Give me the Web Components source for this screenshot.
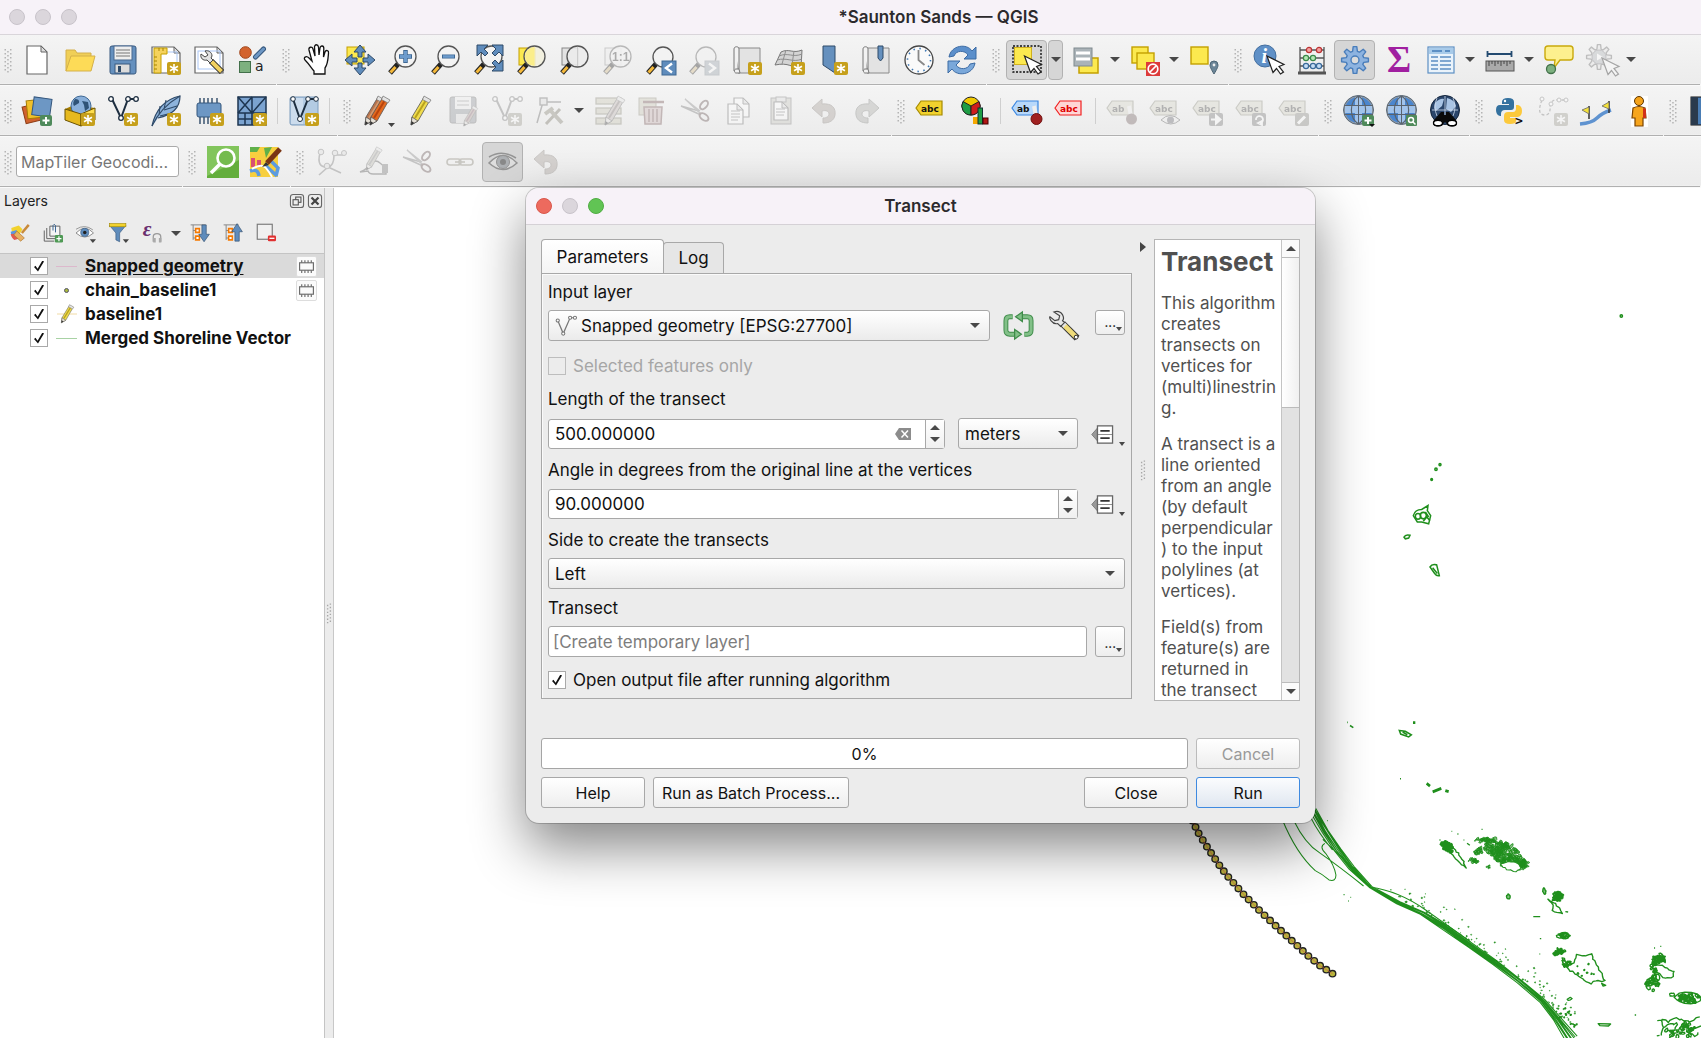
<!DOCTYPE html>
<html lang="en">
<head>
<meta charset="utf-8">
<title>*Saunton Sands — QGIS</title>
<style>
html,body{margin:0;height:100%}
body{font:16px/20px Inter,"Liberation Sans",sans-serif;color:#1a1a1a;background:#ececec;overflow:hidden}
</style>
</head>
<body>
<app-window>
  <title-bar slot="title" heading="*Saunton Sands — QGIS"></title-bar>
  <tool-strip slot="bars">
    <tool-group tools="new open save newlayout layoutmgr style"></tool-group>
    <tool-group tools="hand pan zoomin zoomout zoomfull zoomsel zoomlayer zoomnative! zoomlast zoomnext! newmap new3d newbookmark bookmarks clock refresh"></tool-group>
    <tool-group tools="select*> selform> deselect> selloc"></tool-group>
    <tool-group tools="info abacus gear* sigma table> ruler> bubble action!>"></tool-group>
  </tool-strip>
  <tool-strip slot="bars">
    <tool-group tools="datasrc geopackage shp feather chip mesh | virtual |"></tool-group>
    <tool-group tools="pencils pencil saveedit! addline! vertex!> modify! delete! cut! copy! paste! undo! redo!"></tool-group>
    <tool-group tools="label diagram | pinned redlabel | lpin! leye! lmove! lrot! ledit!"></tool-group>
    <tool-group tools="globeadd globefind globebino"></tool-group>
    <tool-group tools="python digit! flags person"></tool-group>
    <tool-group tools="book"></tool-group>
  </tool-strip>
  <tool-strip slot="bars">
    <tool-group search="MapTiler Geocodi..."></tool-group>
    <tool-group tools="greenfind mapedit"></tool-group>
    <tool-group tools="trace! handdraw! cut! link! eye!* undo!"></tool-group>
  </tool-strip>
  <layers-panel slot="side">
    <layer-row selected symbol="pink" name="Snapped geometry" memory></layer-row>
    <layer-row symbol="dot" name="chain_baseline1" memory></layer-row>
    <layer-row symbol="pen" name="baseline1"></layer-row>
    <layer-row symbol="green" name="Merged Shoreline Vector"></layer-row>
  </layers-panel>
  <map-canvas slot="map"></map-canvas>
  <tool-dialog slot="dialog" heading="Transect">
    <transect-form slot="form"></transect-form>
    <help-pane slot="help">
      <h1>Transect</h1>
      <p>This algorithm<br>creates<br>transects on<br>vertices for<br>(multi)linestrin<br>g.</p>
      <p>A transect is a<br>line oriented<br>from an angle<br>(by default<br>perpendicular<br>) to the input<br>polylines (at<br>vertices).</p>
      <p>Field(s) from<br>feature(s) are<br>returned in<br>the transect</p>
    </help-pane>
  </tool-dialog>
</app-window>
<script>
/* ---------- icon artwork, each on a 32 x 32 grid ---------- */
const badge = (fill = '#c6a01c') => `<rect x="17" y="18" width="14" height="13" rx="2" fill="${fill}"/><path d="M24 20v9M20 22.2l8 4.6M28 22.2l-8 4.6" stroke="#fff" stroke-width="1.6"/>`;
const plusBadge = `<rect x="19" y="20" width="12" height="11" rx="2" fill="#4f8a5b"/><path d="M25 22v7M21.500 25.500h7" stroke="#fff" stroke-width="2"/>`;
const mag = (inner = '', fill = '#f3f3f3') => `<path d="M3 29L11 20" stroke="#222" stroke-width="5"/><path d="M3.500 28.500L8.500 23" stroke="#f5b93a" stroke-width="3"/><circle cx="18.500" cy="12.500" r="10.500" fill="${fill}" fill-opacity=".85" stroke="#555" stroke-width="1.3"/>${inner}`;
const magS = (inner) => `<path d="M3 29L11 20" stroke="#222" stroke-width="5"/><path d="M3.500 28.500L8.500 23" stroke="#f5b93a" stroke-width="3"/><circle cx="18" cy="13" r="10" fill="#f3f3f3" stroke="#555" stroke-width="1.3"/>${inner}`;
const cursor = (x, y) => `<path transform="translate(${x} ${y})" d="M0 0L17 8.500L12 10.500L16.500 16L13.500 18L9.500 12.500L6 16.500z" fill="#fff" stroke="#222" stroke-width="1.2"/>`;
const vnodes = (s = '#1d2e40') => `<path d="M5 4l9 19L21 4h9" fill="none" stroke="${s}" stroke-width="2"/><g fill="#fff" stroke="${s}" stroke-width="1.3"><circle cx="4" cy="4" r="2.3"/><circle cx="14" cy="23" r="2.300"/><circle cx="21" cy="4" r="2.300"/><circle cx="29" cy="4" r="2.300"/></g>`;
const pencil = (x, body, side) => `<g transform="translate(${x} 0)"><path d="M4 30L5 22L17 2L23 5L11 26z" fill="${body}" stroke="#555" stroke-width=".8"/><path d="M8 23L20 3.500" stroke="${side}" stroke-width="2"/><path d="M4 30L5 22L11 26z" fill="#e6e0d6" stroke="#555" stroke-width=".8"/><path d="M4 30l.5-4 2.800 2z" fill="#333"/><path d="M15.500 4.500L17 1l7 4-2 3z" fill="#e4e4e4" stroke="#777" stroke-width=".7"/></g>`;
const tag = (t, fill, stroke, ink, x = 3) => `<path d="M${x} 13l5-7h21v14H${x + 5}z" fill="${fill}" stroke="${stroke}" stroke-width="1.2"/><text x="${x + 5}" y="16.500" font-family="DejaVu Sans" font-weight="700" font-size="9" fill="${ink}">${t}</text>`;
const globe = (fill = '#4a86cf') => `<ellipse cx="15.500" cy="15" rx="15" ry="14.500" fill="#8f9aa6" stroke="#5a6876"/><ellipse cx="15.500" cy="15" rx="13.500" ry="13" fill="${fill}"/><path d="M12 2h7v26h-7zM2 11h27v7H2z" fill="#cfe4fa" opacity=".65"/><path d="M1 10.500h29M1 19.500h29M15.500 1v28" stroke="#59636e"/><path d="M15.500 1C6 7 6 23 15.500 29M15.500 1C25 7 25 23 15.500 29" fill="none" stroke="#59636e" stroke-width="1.2"/>`;
const scissors = `<g fill="none"><path d="M2 11l20 9M2 11l18 5" stroke="#777" stroke-width="1.400"/><path d="M6 4l16 15M6 4l15 12" stroke="#888" stroke-width="1.400"/><ellipse cx="25" cy="10" rx="5" ry="3" transform="rotate(-50 25 10)" stroke="#7a4a4a" stroke-width="2"/><ellipse cx="25" cy="22" rx="5" ry="3" transform="rotate(35 25 22)" stroke="#7a4a4a" stroke-width="2"/></g>`;
const undo = `<path d="M4 13L14 4v5c10-1 14 4 13 11c-1 6-6 8-12 8v-5c4 0 6-2 6-4c0-3-3-4-7-3v6z" fill="#b09a8a" stroke="#8d7c70"/>`;
const gearPath = (fill, stroke, cx = 16, cy = 16, r = 10) => { let d = ''; for (let i = 0; i < 8; i++) { const a = i * Math.PI / 4; const p = (rr, o) => `${(cx + rr * Math.cos(a + o)).toFixed(1)} ${(cy + rr * Math.sin(a + o)).toFixed(1)}`; d += `${i ? 'L' : 'M'}${p(r - 1, -.27)}L${p(r + 3.500, -.13)}L${p(r + 3.500, .13)}L${p(r - 1, .27)}`; } return `<path d="${d}z" fill="${fill}" stroke="${stroke}" stroke-width="1.4" stroke-linejoin="round"/>`; };
const arrow4 = (d, f) => [0, 90, 180, 270].map(a => `<path transform="rotate(${a} 16 16)" d="${d}" fill="${f}" stroke="#2f4a68" stroke-width="1"/>`).join('');
const doc = (x, y, w, h, extra = '') => `<path d="M${x} ${y}h${w - 6}l6 6v${h - 6}h-${w}z" fill="#fff" stroke="#666" stroke-width="1.2"/><path d="M${x + w - 6} ${y}v6h6z" fill="#ddd" stroke="#666"/>${extra}`;
const wrench = `<path d="M18 17L29 28" stroke="#222" stroke-width="6"/><path d="M18.500 17.500L28.500 27.500" stroke="#f0d060" stroke-width="4"/><path d="M12 7c3-1 7 1 7 5l-1 2 2 2-3 3-3-3c-4 1-7-2-6-6l4 3 3-2z" fill="#e2e2e2" stroke="#444" stroke-width="1"/>`;
const I = {
  new: doc(6, 2, 20, 28),
  open: `<path d="M2 27V6h9l2 3h14v5" fill="#f0cf57" stroke="#d4b04a"/><path d="M2 27L7 12h24l-4 15z" fill="#fddb57" stroke="#d4b04a"/>`,
  save: `<rect x="3" y="2" width="26" height="28" rx="2" fill="#6590be" stroke="#38597f"/><rect x="7" y="2" width="18" height="14" fill="#eee" stroke="#48698f"/><path d="M9 6h14M9 9h14M9 12h14" stroke="#777" stroke-width="1.2"/><rect x="8" y="20" width="15" height="9" fill="#dcdcdc" stroke="#38597f"/><rect x="11" y="22" width="3" height="6" fill="#2f4a68"/>`,
  newlayout: doc(2, 3, 28, 26, '<path d="M7 8h20v18" fill="none" stroke="#a9c6f5"/>') + `<path d="M4 4h13v6h-6v19H4z" fill="#f5d25c" stroke="#c4a000"/><path d="M4 13h3M4 17h3M4 21h3M4 25h3M9 4v3M13 4v3" stroke="#a88400"/>` + badge(),
  layoutmgr: doc(2, 3, 28, 26, '<rect x="5" y="7" width="22" height="18" fill="none" stroke="#a9c6f5"/>') + wrench,
  style: `<circle cx="9.500" cy="8.500" r="5.800" fill="#d3642f" stroke="#a04418"/><path d="M19.500 13L27.500 5" stroke="#35577d" stroke-width="5" stroke-linecap="round"/><path d="M19.500 13L27.500 5" stroke="#6d97c4" stroke-width="3" stroke-linecap="round"/><rect x="3.500" y="17.500" width="11" height="11" fill="#7db07f" stroke="#42704a"/><text x="19" y="27" font-family="DejaVu Sans" font-size="14" fill="#222">a</text>`,
  hand: `<path d="M13 30v-3C10 24 9 21 4 16c-2-2 1-5 4-2l3 3L8 6c-.6-3 3-4 4-1l2 7-.5-9c0-3 3.500-3 4 0l.5 8 1-7c.4-3 4-2.500 3.800.5L22.500 13l1.500-5c1-2.500 4-1.500 3.500 1C27 15 27 20 24 24v6z" fill="#fff" stroke="#111" stroke-width="1.3"/>`,
  pan: `<rect x="3" y="3" width="17" height="17" fill="#fce94f" stroke="#c4a000"/>` + arrow4('M16 1l6 7h-4v5h-4v-5h-4z', '#5f8cbc'),
  zoomin: mag('<path d="M18.500 6v13M12 12.500h13" stroke="#3e6894" stroke-width="4.500"/><path d="M18.500 7v11M13 12.500h11" stroke="#6d9bcc" stroke-width="3"/>'),
  zoomout: mag('<path d="M12 12.500h13" stroke="#3e6894" stroke-width="4"/><path d="M13 12.500h11" stroke="#6d9bcc" stroke-width="2.500"/>'),
  zoomfull: mag('') + ['', 'rotate(90 17 14)', 'rotate(180 17 14)'].map(t => `<path transform="${t}" d="M4 1h11l-4 4 4 4-3 3-4-4-4 4z" fill="#5f8cbc" stroke="#2f4a68"/>`).join(''),
  zoomsel: `<rect x="3" y="4" width="16" height="17" fill="#fce94f" stroke="#c4a000"/>` + mag('<path d="M18.500 3v19a9.500 9.500 0 0 1 0-19" fill="#fbee8a"/>', '#f2f0dc'),
  zoomlayer: `<rect x="3" y="4" width="16" height="17" fill="#e2e2e2" stroke="#888"/>` + mag('<path d="M18.500 3v19" stroke="#ccc"/>', '#ececec'),
  zoomnative: `<rect x="3" y="4" width="16" height="17" fill="#eee" stroke="#888"/>` + mag('<text x="10" y="17" font-family="Liberation Sans" font-weight="700" font-size="12" fill="#333">1:1</text>'),
  zoomlast: magS('<rect x="17" y="17" width="14" height="14" fill="#5f8cbc" stroke="#3e6894"/><path d="M27 19.500L21 24l6 4.500" fill="none" stroke="#fff" stroke-width="2.4"/>'),
  zoomnext: magS('<rect x="17" y="17" width="14" height="14" fill="#8fa6bd" stroke="#7a8fa3"/><path d="M21 19.500l6 4.500-6 4.500" fill="none" stroke="#fff" stroke-width="2.400"/>'),
  newmap: `<path d="M7 4h22v25H7z" fill="#e3e3e3" stroke="#8a8a8a"/><path d="M3 5c0-3 5-3 5 0v20H5c-2 0-2 4 0 4h4l-1-4M3 5v22" fill="#f3f3f3" stroke="#777"/>` + badge(),
  new3d: `<path d="M1 21L7 8c8-4 12 2 21-2l-1 18c-9 0-12-6-26-3z" fill="#d4d4d4" stroke="#777"/><path d="M3 16c10-3 16 3 25-1M5 12c9-4 14 2 23-2M12 6l-4 14M20 7l-2 14" fill="none" stroke="#8f8f8f"/>` + badge(),
  newbookmark: `<path d="M6 2h12v27l-6-4-6-4z" fill="#6590be" stroke="#2f4a68"/>` + badge(),
  bookmarks: `<path d="M7 4h22v25H7z" fill="#e3e3e3" stroke="#8a8a8a"/><path d="M3 5c0-3 5-3 5 0v20H5c-2 0-2 4 0 4h4l-1-4M3 5v22" fill="#f3f3f3" stroke="#777"/><path d="M18 2h5v12l-2.500 3L18 14z" fill="#6590be" stroke="#2f4a68"/>`,
  clock: `<circle cx="16" cy="16" r="14" fill="#fafafa" stroke="#444" stroke-width="1.300"/><circle cx="16" cy="16" r="11.500" fill="none" stroke="#3e78b4" stroke-width="1.600" stroke-dasharray="1.500 4.520"/><path d="M15.500 6v10l6 5" fill="none" stroke="#888" stroke-width="1.800"/>`,
  refresh: `<path d="M3 13C5 1 21-1 26 7l4-4v12H18l4-4c-3-5-12-5-14 1z" fill="#5b8fcb" stroke="#3b6aa3"/><path d="M29 19C27 31 11 33 6 25l-4 4V17h12l-4 4c3 5 12 5 14-1z" fill="#7aa8da" stroke="#3b6aa3"/>`,
  select: `<rect x="2" y="2" width="28" height="26" fill="none" stroke="#111" stroke-width="1.400" stroke-dasharray="2 1.500"/><rect x="3.500" y="3.500" width="17" height="17" fill="#fce94f" stroke="#d0b020"/>` + cursor(13.500, 12),
  selform: `<rect x="9" y="14" width="19" height="15" fill="#fce94f" stroke="#c4a000" stroke-width="1.500"/><rect x="4" y="4" width="18" height="18" fill="#aab3b8" stroke="#7f898e"/><path d="M6 9h14M6 15h14" stroke="#fff" stroke-width="3"/>`,
  deselect: `<rect x="3" y="3" width="16" height="16" fill="#fce94f" stroke="#c4a000" stroke-width="1.400"/><rect x="8" y="9" width="17" height="16" fill="#fce94f" stroke="#c4a000" stroke-width="1.400"/><rect x="17" y="18" width="14" height="14" fill="#dd3a3a"/><circle cx="24" cy="25" r="4.800" fill="none" stroke="#fff" stroke-width="1.700"/><path d="M20.500 28.500l7-7" stroke="#fff" stroke-width="1.700"/>`,
  selloc: `<rect x="3" y="3" width="17" height="17" fill="#fce94f" stroke="#c4a000" stroke-width="1.400"/><path d="M26 30c-3-5-4-7-4-9a4 4 0 0 1 8 0c0 2-1 4-4 9z" fill="#6b8597" stroke="#4c6474"/><circle cx="26" cy="21" r="1.400" fill="#eee"/>`,
  info: `<circle cx="12" cy="12" r="11" fill="#5f90c7" stroke="#446f9f"/><text x="8.500" y="19" font-family="Liberation Serif" font-style="italic" font-weight="700" font-size="20" fill="#fff">i</text>` + cursor(14, 12),
  abacus: `<path d="M4 3v25M28 3v25M4 6h24M4 14h24M4 22h24" stroke="#555" stroke-width="1.300"/><path d="M2 29h28" stroke="#555" stroke-width="3"/><g stroke-width="1.200"><g fill="#f5a0a0" stroke="#b33"><circle cx="13" cy="6" r="2.600"/><circle cx="23" cy="6" r="2.600"/></g><g fill="#b5e8b5" stroke="#3a8a4a"><circle cx="10" cy="14" r="2.600"/><circle cx="17" cy="14" r="2.600"/></g><g fill="#c5ddf5" stroke="#3a6a9a"><circle cx="10" cy="22" r="2.600"/><circle cx="17" cy="22" r="2.600"/><circle cx="23" cy="22" r="2.600"/></g></g>`,
  gear: gearPath('#8db3e0', '#4a7ebb') + `<circle cx="16" cy="16" r="4" fill="#dcdcdc" stroke="#4a7ebb" stroke-width="1.400"/>`,
  sigma: `<text x="5" y="28" font-family="Liberation Serif" font-weight="700" font-size="37" fill="#a01fa0">Σ</text>`,
  table: `<rect x="3" y="3" width="26" height="26" fill="#eaf3fb" stroke="#5c8fc4" stroke-width="1.200"/><rect x="4" y="4" width="24" height="6" fill="#a8cbea"/><path d="M7 7h10M20 7h5" stroke="#5c8fc4" stroke-width="2"/><path d="M6 13h7M15 13h11M6 17h7M15 17h11M6 21h7M15 21h11M6 25h7M15 25h11" stroke="#5c8fc4" stroke-width="1.300"/>`,
  ruler: `<path d="M3 10h25M3.500 7v6M27.500 7v6" stroke="#234a70" stroke-width="1.800"/><rect x="2" y="17" width="28" height="10" fill="#aaa" stroke="#555"/><path d="M5 17v5M8 17v3M11 17v5M14 17v3M17 17v5M20 17v3M23 17v5M26 17v3" stroke="#444"/>`,
  bubble: `<path d="M12 20l-3 7" stroke="#444"/><path d="M5 2h22q3 0 3 3v8q0 3-3 3H17l-6 8 1-8H5q-3 0-3-3V5q0-3 3-3z" fill="#fdf08e" stroke="#c9a90c" stroke-width="1.400"/><circle cx="8" cy="25" r="4.500" fill="#7db07f" stroke="#42704a" stroke-width="1.300"/>`,
  action: gearPath('#e4e4e4', '#666', 13, 13, 9) + `<circle cx="13" cy="13" r="7" fill="#a8b4be" stroke="#778"/><path d="M11 9.500v7l6-3.500z" fill="#fff"/>` + cursor(16, 14),
  datasrc: `<rect x="3" y="10" width="17" height="17" fill="#d0622f" stroke="#8e3e17" transform="rotate(-14 11 19)"/><rect x="6" y="5" width="17" height="18" fill="#f0c02a" stroke="#a67d00" transform="rotate(-6 14 14)"/><rect x="12" y="3" width="18" height="18" fill="#6d97c4" stroke="#35577d" transform="rotate(8 21 11)"/>` + plusBadge,
  geopackage: `<path d="M1 14l9-4 21 3-14 6z" fill="#a67d00"/><circle cx="17" cy="11" r="10" fill="#8ab0da" stroke="#3e6894"/><path d="M11 4q5 0 4 4l-5 3q-2-3 1-7zM18 6l6 1 1 6-4 3-1-6z" fill="#2f5377"/><path d="M1 14l16 5v12L1 25z" fill="#e6b91e" stroke="#6b5200"/><path d="M31 13l-14 6v12l14-6z" fill="#fddd4d" stroke="#6b5200"/>` + badge(),
  shp: vnodes() + badge(),
  feather: `<path d="M2 31C5 17 12 5 30 1c0 12-8 19-22 22" fill="#8db3dc" stroke="#2f4a68" stroke-width="1.200"/><path d="M2 31C8 18 18 8 30 1M10 21l12-3M14 15l13-4M9 20l1-9M14 14l2-9" fill="none" stroke="#2f4a68" stroke-width="1.100"/>` + badge(),
  chip: `<path d="M7 3v26M11 3v26M15 3v26M19 3v26M24 3v26" stroke="#2f4a68" stroke-width="1.400"/><rect x="4" y="8" width="24" height="14" rx="2" fill="#6d97c4" stroke="#35577d"/>` + badge(),
  mesh: `<rect x="2" y="2" width="28" height="28" fill="#7ba3d0" stroke="#1d3550" stroke-width="1.500"/><path d="M16 2v28M2 18h28M2 2l14 16M16 2L2 18M30 2L16 18M2 24h14M9 18v12" stroke="#1d3550" stroke-width="1.500"/>` + badge(),
  virtual: `<rect x="2" y="2" width="28" height="28" rx="2" fill="#b3cbe3" stroke="#7d9cbd"/><path d="M3 3h12v26H3z" fill="#dce8f4" opacity=".6"/><path d="M5 4l7 20L20 4h8" fill="none" stroke="#1d2e40" stroke-width="2"/><g fill="#fff" stroke="#1d2e40"><circle cx="5" cy="4" r="2.300"/><circle cx="20" cy="4" r="2.300"/><circle cx="28" cy="4" r="2.300"/><circle cx="12" cy="24" r="2.500"/></g>` + badge(),
  pencils: pencil(-1, '#b8734c', '#d39a70') + pencil(4, '#e36a1f', '#b8430e') + `<path d="M26 28h7l-3.500 4z" fill="#444"/>`,
  pencil: pencil(2, '#f0dc4e', '#b8a21c'),
  saveedit: `<rect x="2" y="2" width="26" height="26" rx="2" fill="#8794a3" stroke="#666"/><rect x="7" y="2" width="16" height="12" fill="#eee"/><path d="M9 6h12M9 10h12" stroke="#888"/><rect x="8" y="19" width="14" height="9" fill="#ddd"/><g transform="translate(13 10) scale(.700)">${pencil(0, '#c79a8a', '#a57')}</g>`,
  addline: vnodes('#777') + badge('#a09a80'),
  vertex: `<path d="M3 28L9 7l18 0" fill="none" stroke="#666" stroke-width="1.500"/><rect x="6" y="3" width="7" height="7" fill="#ddd" stroke="#666" stroke-width="1.400"/><path d="M12 29L26 14" stroke="#7a7250" stroke-width="3"/><path d="M16 15l12 13M11 19l8-6" stroke="#8a8260" stroke-width="4"/>`,
  modify: `<g fill="#cfc79a" stroke="#8d875f" stroke-width="1.300"><rect x="3" y="3" width="25" height="6"/><rect x="3" y="13" width="25" height="6"/><rect x="3" y="23" width="25" height="6"/></g>` + pencil(8, '#c9b0a8', '#8a706a'),
  delete: `<rect x="3" y="3" width="17" height="17" fill="#cfc79a" stroke="#8d875f"/><path d="M7 7h21" stroke="#9a4a4a" stroke-width="2.500"/><path d="M8 12h18l-1 17H9z" fill="#e0a8a8" stroke="#9a4a4a" stroke-width="1.500"/><path d="M13 14v13M17 14v13M21 14v13" stroke="#9a4a4a" stroke-width="1.500"/>`,
  cut: scissors,
  copy: doc(12, 3, 15, 19) + doc(6, 9, 15, 20, '<path d="M9 16h9M9 19h9M9 22h9M9 25h7" stroke="#777"/>'),
  paste: `<rect x="6" y="3" width="20" height="26" fill="#c9c6b5" stroke="#777"/><rect x="11" y="2" width="10" height="5" fill="#ddd" stroke="#777"/>` + doc(9, 7, 14, 18, '<path d="M11 14h9M11 17h9M11 20h8" stroke="#777"/>'),
  undo, redo: `<g transform="matrix(-1 0 0 1 32 0)">${undo.replace('#b09a8a', '#a9aaa0').replace('#8d7c70', '#7c8076')}</g>`,
  label: tag('abc', '#f2d22e', '#a68b00', '#111', 0),
  diagram: `<circle cx="12" cy="11" r="9" fill="#f0c800" stroke="#222"/><path d="M12 11L4 6.500a9 9 0 0 0 8 13.500z" fill="#1f9d45" stroke="#222"/><path d="M12 11l8-4.500a9 9 0 0 1-8 13.500z" fill="#cf1d1d" stroke="#222"/><rect x="14" y="22" width="5" height="7" fill="#f5a800"/><rect x="19" y="13" width="4.500" height="16" fill="#1f9d45" stroke="#133"/><rect x="24" y="23" width="5" height="6" fill="#b01515" stroke="#400"/>`,
  pinned: tag('ab', '#b8d8fa', '#3a86e0', '#111', 1) + `<path d="M23 11l2 10" stroke="#eee" stroke-width="4"/><circle cx="25.500" cy="24" r="5.500" fill="#a02020" stroke="#701010"/>`,
  redlabel: tag('abc', '#ffd6d6', '#f02020', '#e00000', 1),
  lpin: tag('ab', '#d8d5b0', '#8b8b6a', '#444', 1) + `<path d="M23 11l2 10" stroke="#eee" stroke-width="4"/><circle cx="25.500" cy="24" r="5.500" fill="#8a5a5a"/>`,
  leye: tag('abc', '#d8d5b0', '#8b8b6a', '#444', 1) + `<path d="M12 25q9-9 19 0q-9 8-19 0z" fill="#eee" stroke="#555"/><circle cx="21.500" cy="25" r="3.500" fill="#667"/>`,
  lmove: tag('abc', '#d8d5b0', '#8b8b6a', '#444', 1) + `<rect x="17" y="18" width="14" height="13" rx="2" fill="#777"/><path d="M19 24.500h6M24 20.500l4.500 4-4.500 4z" stroke="#fff" stroke-width="2" fill="#fff"/>`,
  lrot: tag('abc', '#d8d5b0', '#8b8b6a', '#444', 1) + `<rect x="17" y="18" width="14" height="13" rx="2" fill="#777"/><path d="M21 25a3.500 3.500 0 1 1 4 3M23 28l4-2v4z" stroke="#fff" stroke-width="1.800" fill="none"/>`,
  ledit: tag('abc', '#d8d5b0', '#8b8b6a', '#444', 1) + `<rect x="17" y="18" width="14" height="13" rx="2" fill="#8a8778"/><path d="M20 28.500l7-7" stroke="#fff" stroke-width="3"/>`,
  globeadd: globe() + plusBadge + `<path d="M26 29h6l-3 3z" fill="#111"/>`,
  globefind: globe() + `<rect x="20" y="20" width="11" height="11" rx="1" fill="#4f8a5b"/><circle cx="25" cy="25" r="2.500" fill="none" stroke="#fff" stroke-width="1.500"/><path d="M27 27l2.500 2.500" stroke="#fff" stroke-width="1.500"/>`,
  globebino: `<circle cx="16" cy="15" r="14.500" fill="#2b466b" stroke="#14253c"/><path d="M6 8q5-5 9-4l-2 7-6 5q-3-3-1-8zM18 3q8 2 9 8l-5 6-5-3z" fill="#a9c4e4"/><path d="M3 15h26M16 1v20M8 3q-4 9 0 18M24 3q4 9 0 18" fill="none" stroke="#cfdcec" stroke-width=".8"/><path d="M12 17h3v3h2v-3h3l7 8q3 6-3 6.500-6 .500-7-4h-2q-1 4.500-7 4-6-.500-3-6.500z" fill="#0a0a0a"/><ellipse cx="9" cy="28" rx="4.500" ry="2.800" fill="#fff" stroke="#000" stroke-width="1.400"/><ellipse cx="23" cy="28" rx="4.500" ry="2.800" fill="#fff" stroke="#000" stroke-width="1.400"/>`,
  python: `<path d="M8 9V7q0-4 6-4t6 4v5q0 3-3 3h-6q-4 0-4 4v2H6q-4-1-4-6t4-5h9V9z" fill="#34719f"/><circle cx="11" cy="6" r="1.200" fill="#fff"/><path d="M22 10h2q4 1 4 6t-4 6h-8v1h6v3q0 3-6 3t-6-4v-4q0-4 4-4h5q3 0 3-4z" fill="#fcc93c"/><text x="21" y="30" font-family="DejaVu Sans Mono" font-size="13" font-weight="700" fill="#111">&gt;</text>`,
  digit: `<path d="M5 5q-6 15 3 15 6 0 5-10 2-6 8-5h8" fill="none" stroke="#777" stroke-width="1.300" stroke-dasharray="3 2"/><g fill="#fff" stroke="#777"><circle cx="5" cy="4" r="2"/><circle cx="14" cy="9" r="2"/><circle cx="22" cy="5" r="2"/><circle cx="29" cy="5" r="2"/></g>` + badge('#a09a80'),
  flags: `<path d="M0 29q12-1 17-6t14-8" fill="none" stroke="#5f93d0" stroke-width="3.500"/><path d="M9 11v13M29 6v12" stroke="#333" stroke-width="1.500"/><path d="M9 12L2 15l7 4zM29 7l-7 4 7 3z" fill="#f5e23a" stroke="#666" stroke-width=".8"/>`,
  person: `<rect x="8" y="1" width="17" height="31" fill="#fff"/><circle cx="16" cy="6" r="4.500" fill="#f5a31a" stroke="#5a3300"/><path d="M10 13q6-3 12 0l1 10h-3v8h-8v-8H9z" fill="#f7a51c" stroke="#7a4300" stroke-width="1.200"/><path d="M20 13l3 1v9h-3z" fill="#d0311a"/>`,
  book: `<rect x="3" y="2" width="28" height="28" fill="#4a7db5" stroke="#111"/><rect x="3" y="2" width="7" height="28" fill="#2a3a4d"/>`,
  greenfind: `<rect x="0" y="0" width="32" height="32" fill="#63ae3c"/><path d="M0 0h32v14L0 30z" fill="#82c55c"/><circle cx="19" cy="12" r="8.500" fill="#74bb4e" stroke="#fff" stroke-width="2.600"/><path d="M13 18L4 27" stroke="#fff" stroke-width="3.500"/>`,
  mapedit: `<rect x="0" y="1" width="28" height="30" fill="#f7cf3f"/><path d="M0 1h10l-3 5H0zM14 2l8-1-6 11z" fill="#5fb04a"/><path d="M1 12h4v9H1zM7 14h4v7H7z" fill="#d94f73"/><path d="M0 25q8-3 9 5M16 20l11 10M20 14l8 8-2 8" fill="none" stroke="#5c9be0" stroke-width="3.500"/><path d="M2 23q10-6 14-1t6 9" fill="none" stroke="#fff" stroke-width="2"/><path d="M12 21l4-5 3 3z" fill="#333"/><path d="M17 17L30 3" stroke="#7a3514" stroke-width="5"/>`,
  trace: `<path d="M5 7q-4 15 8 14 6-1 6-12h9M13 21l-9 8M13 21l13 6" fill="none" stroke="#777" stroke-width="1.600"/><g fill="#ddd" stroke="#777"><circle cx="6" cy="6" r="2.800"/><circle cx="12" cy="20" r="2.800"/><circle cx="20" cy="7" r="2.800"/><circle cx="29" cy="7" r="2.500"/></g>`,
  handdraw: `<path d="M2 26q8-3 10-9 6-4 10 0l6 5v6H15q-4 0-5-3z" fill="#eee" stroke="#555" stroke-width="1.400"/><path d="M24 18h6v9h-6z" fill="#777"/><g transform="translate(5 0) scale(.800)">${pencil(0, '#bdb9a2', '#888')}</g>`,
  link: `<g fill="none" stroke="#8a8060" stroke-width="1.600"><rect x="3" y="13" width="14" height="6" rx="3"/><rect x="15" y="13" width="14" height="6" rx="3"/><path d="M11 16h10"/></g>`,
  eye: `<path d="M2 17q14-15 28 0q-14 13-28 0z" fill="#eee" stroke="#222" stroke-width="1.500"/><path d="M2 11q13-8 27 1" fill="none" stroke="#222" stroke-width="1.500"/><circle cx="16" cy="16" r="6.500" fill="#5d7086" stroke="#222"/><circle cx="16" cy="16" r="3" fill="#000"/>`,
  /* smaller artwork of the layer panel and the form, also on the 32 grid */
  brush: `<path d="M2 8l12-4 6 6-6 10H4z" fill="#f2d22e"/><path d="M1 14l10-3-2 9-7-1z" fill="#5a96e0"/><path d="M1 18q7-2 9 2l4 5-7 2q-4-2-6-9z" fill="#e05a50"/><path d="M11 13l12 11-6 5L6 19z" fill="#e8b062" stroke="#a8702a"/><path d="M19 16L30 3" stroke="#c98a3a" stroke-width="4"/>`,
  addgroup: `<path d="M2 12v17h16M6 8v17h14" fill="none" stroke="#666" stroke-width="1.600"/><path d="M11 5h16v16H11z" fill="#f4f4f4" stroke="#666" stroke-width="1.600"/><path d="M16 12V4q2-4 4 0v11" fill="none" stroke="#3e6894" stroke-width="1.600"/><rect x="19" y="19" width="13" height="12" rx="2" fill="#4f9a55"/><path d="M25.500 21v8M21.500 25h8" stroke="#fff" stroke-width="2"/>`,
  eyes: `<path d="M0 16q14-15 28 0q-14 13-28 0z" fill="#fff" stroke="#888" stroke-width="1.500"/><path d="M0 10q14-9 27 1" fill="none" stroke="#888" stroke-width="1.300"/><circle cx="14" cy="15" r="6.500" fill="#5f8cbc" stroke="#35577d"/><circle cx="14" cy="15" r="2.800" fill="#222"/><path d="M22 26h10l-5 6z" fill="#444"/>`,
  filter: `<path d="M1 4h26L17 16v14l-6-3V16z" fill="#5f8cbc" stroke="#35577d"/><rect x="1" y="1" width="26" height="5" fill="#f2d22e" stroke="#a68b00"/><path d="M22 26h10l-5 6z" fill="#444"/>`,
  epsilon: `<text x="1" y="20" font-family="Liberation Serif" font-weight="700" font-style="italic" font-size="34" fill="#6a3070">ε</text><path d="M18 30v-8q0-5 6-5t6 5v8" fill="none" stroke="#999" stroke-width="2"/><path d="M18 24h4v7h-4zM27 24h4v7h-4z" fill="#aaa"/>`,
  expand: `<path d="M1 3h24M5 3v24M5 12h6M5 24h6" stroke="#888" stroke-width="1.600"/><path d="M9 9h6v6H9zM9 21h6v6H9z" fill="#fff" stroke="#f57900" stroke-width="2.500"/><path d="M19 3h7v15h5L22.500 30 14 18h5z" fill="#5f8cbc" stroke="#2f4a68"/>`,
  collapse: `<path d="M1 3h24M5 3v24M5 12h6M5 24h6" stroke="#888" stroke-width="1.600"/><path d="M9 9h6v6H9zM9 21h6v6H9z" fill="#fff" stroke="#f57900" stroke-width="2.500"/><path d="M19 29h7V14h5L22.500 1 14 14h5z" fill="#5f8cbc" stroke="#2f4a68"/>`,
  remove: `<rect x="2" y="2" width="24" height="24" fill="#f0f0f0" stroke="#777" stroke-width="1.800"/><rect x="19" y="20" width="13" height="9" rx="2" fill="#e03030"/><path d="M21.500 24.500h8" stroke="#fff" stroke-width="2"/>`,
  float: `<rect x="1" y="1" width="30" height="30" rx="6" fill="none" stroke="#666" stroke-width="2.500"/><rect x="13" y="7" width="12" height="12" fill="none" stroke="#555" stroke-width="2.500"/><rect x="7" y="13" width="12" height="12" fill="#ececec" stroke="#555" stroke-width="2.500"/>`,
  close: `<rect x="1" y="1" width="30" height="30" rx="6" fill="none" stroke="#666" stroke-width="2.500"/><path d="M8 8l16 16M24 8L8 24" stroke="#444" stroke-width="5"/>`,
  memory: `<g fill="none" stroke="#6d6d6d" stroke-width="2.200"><rect x="3" y="9" width="26" height="14"/><path d="M7 4v5M13 4v5M19 4v5M25 4v5M7 23v5M13 23v5M19 23v5M25 23v5"/></g>`,
  penline: `<path d="M0 16h32" stroke="#f0d9a0" stroke-width="1.500"/>` + pencil(3, '#f0dc4e', '#b8a21c'),
  vsmall: `<path d="M4 8l8 19L22 4h8" fill="none" stroke="#777" stroke-width="1.800"/><g fill="#fff" stroke="#777" stroke-width="1.500"><circle cx="4" cy="8" r="2.300"/><circle cx="12" cy="27" r="2.300"/><circle cx="22" cy="4" r="2.300"/><circle cx="29" cy="4" r="2.300"/></g>`,
  iterate: `<g fill="none" stroke-linejoin="round"><path d="M10 7H7q-4 0-4 4v10q0 4 4 4h6M22 25h3q4 0 4-4V11q0-4-4-4h-6" stroke="#3f8c4a" stroke-width="5"/><path d="M10 7H7q-4 0-4 4v10q0 4 4 4h6M22 25h3q4 0 4-4V11q0-4-4-4h-6" stroke="#82c088" stroke-width="3"/></g><path d="M20 2v10l-7-5zM12 20v10l7-5z" fill="#82c088" stroke="#3f8c4a" stroke-width="1.300"/>`,
  wrench: `<path d="M14 14L29 29" stroke="#333" stroke-width="7"/><path d="M14 14l3 3" stroke="#e4e4e4" stroke-width="5"/><path d="M16.500 16.500L28 28" stroke="#f0dc7a" stroke-width="5"/><circle cx="28" cy="28" r="2" fill="#fff" stroke="#222"/><path d="M5 2q6-2 9 3 2 4 0 6l2 2-4 4-3-3q-4 1-7-3-2-3-1-4l5 4 4-1 1-4z" fill="#e8e8e8" stroke="#444" stroke-width="1.200"/>`,
  defined: `<path d="M9 7v18L1 16z" fill="#999" stroke="#666"/><rect x="9" y="4" width="21" height="24" fill="#fff" stroke="#666" stroke-width="1.800"/><path d="M13 11h13M13 21h13" stroke="#333" stroke-width="2.500"/><path d="M9 16h21" stroke="#666"/>`,
  erase: `<path d="M0 16L8 4h24v24H8z" fill="#8c8c8c"/><path d="M13 9l13 14M26 9L13 23" stroke="#fff" stroke-width="3"/>`,
  grip: `<g fill="#b4b4b4" transform="translate(2.500 0)">${[5, 9, 13, 17, 21, 25].map(y => `<path d="M10 ${y}h1.500v1.500h-1.500zM15.500 ${y}h1.500v1.500h-1.500zM12.700 ${y + 2}h1.500v1.500h-1.500z"/>`).join('')}</g>`,
  dots: `<g fill="#a8a8a8">${[2, 7, 12, 17, 22, 27].map(y => `<path d="M17 ${y}h2v2h-2zM13 ${y + 2}h2v2h-2z"/>`).join('')}</g>`
};

const def = (name, cls) => customElements.define(name, cls);
class Base extends HTMLElement {
  connectedCallback() {
    if (this.shadowRoot) return;
    this.attachShadow({ mode: 'open' }).innerHTML = `<style>:host,*{box-sizing:border-box}button,input,select{font:inherit;color:inherit;margin:0}${this.css()}</style>${this.html()}`;
  }
  at(n) { return this.getAttribute(n) || ''; }
}

def('art-icon', class extends Base {
  css() { const s = this.at('size') || 32; return `:host{display:block;flex:none;width:${s}px;height:${s}px}svg{display:block;width:100%;height:100%;overflow:visible}`; }
  html() { return `<svg viewBox="0 0 32 32" aria-hidden="true">${I[this.at('name')]}</svg>`; }
});

def('down-arrow', class extends Base {
  css() { return `:host{display:block;flex:none;width:10px;height:5px}:host([small]){width:6px;height:4px}svg{display:block;width:100%;height:100%}:host([up]) svg{transform:rotate(180deg)}`; }
  html() { return `<svg viewBox="0 0 10 6" preserveAspectRatio="none"><path d="M0 0h10L5 6z" fill="#484848"/></svg>`; }
});

def('traffic-lights', class extends Base {
  css() { return `:host{display:flex;gap:10px}i{width:16px;height:16px;border-radius:50%;background:#dbd6dc;border:1px solid #c8c3ca}:host([live]) i:first-of-type{background:#ed6a5e;border-color:#d9574c}:host([live]) i:last-of-type{background:#61c454;border-color:#50ad43}`; }
  html() { return `<i></i><i></i><i></i>`; }
});

def('title-bar', class extends Base {
  css() { return `:host{display:grid;grid-template-columns:176px 1fr;align-items:center;height:35px;flex:none;padding-bottom:1px;background:#f7f2f8;border-bottom:1px solid #d9d5da}traffic-lights{padding-left:9px}b{font-weight:600;font-size:17px;color:#2c2a2d;text-align:center}`; }
  html() { return `<traffic-lights></traffic-lights><b>${this.at('heading')}</b>`; }
});

def('app-window', class extends Base {
  css() { return `:host{display:flex;flex-direction:column;height:100vh;position:relative;overflow:hidden}.main{flex:1;display:flex;min-height:0}.split{width:9px;flex:none;background:#ececec;display:flex;align-items:center;justify-content:center;border-left:1px solid #c4c4c4}::slotted(map-canvas){flex:1;min-width:0}`; }
  html() { return `<slot name="title"></slot><slot name="bars"></slot><div class="main"><slot name="side"></slot><div class="split"><art-icon name="dots" size="22"></art-icon></div><slot name="map"></slot></div><slot name="dialog"></slot>`; }
});

def('tool-strip', class extends Base {
  css() { return `:host{display:flex;height:51px;background:linear-gradient(#f4f4f4,#ececec 48px,#fafafa 50px);flex:none;overflow:hidden}::slotted(tool-group:last-child){flex:1 0 auto}::slotted(tool-group:first-child){--lead:15px}`; }
  html() { return `<slot></slot>`; }
});

def('tool-group', class extends Base {
  css() { return `:host{display:flex;align-items:center;flex:none;padding:0 4px 2px 0;background:linear-gradient(#b0b0b0,#b0b0b0) 0 49px/calc(100% - 1px) 1px no-repeat}
  .lead{width:var(--lead,18px);display:flex;justify-content:center;flex:none}.lead art-icon{margin:0 -8px}
  button{width:41px;height:40px;margin:0 1px;padding:0;border:1px solid transparent;border-radius:4px;background:none;display:grid;place-items:center;flex:none}
  button.on{background:#d6d6d6;border-color:#b2b2b2}
  button:disabled art-icon{opacity:.36;filter:grayscale(.6)}
  button.more{width:15px;margin:0 1px 0 0}
  hr{width:1px;height:26px;margin:0 4px;border:0;background:#cfcfcf;flex:none}
  input{width:163px;height:31px;margin-left:1px;border:1px solid #aaa;border-radius:3px;padding:0 4px;background:#fff;color:#777;font-size:16px}input::placeholder{color:#777;opacity:1}`; }
  html() {
    const s = this.at('search');
    let h = `<div class="lead"><art-icon name="grip"></art-icon></div>`;
    if (s) return h + `<input type="text" aria-label="Geocoder" placeholder="${s}">`;
    for (const t of this.at('tools').split(' ')) {
      if (t === '|') { h += '<hr>'; continue; }
      const n = t.replace(/[!*>]/g, ''), on = t.includes('*') ? ' class="on"' : '';
      h += `<button type="button" aria-label="${n}"${on}${t.includes('!') ? ' disabled' : ''}><art-icon name="${n}"></art-icon></button>`;
      if (t.includes('>')) h += `<button type="button" aria-label="${n} menu" class="more${on ? ' on' : ''}"><down-arrow></down-arrow></button>`;
    }
    return h;
  }
});

def('layers-panel', class extends Base {
  css() { return `:host{display:flex;flex-direction:column;width:324px;flex:none;background:#ececec}
  header{display:flex;align-items:center;gap:4px;height:25px;padding:0 2px 0 4px;font-size:14px;color:#222}header span{flex:1}
  nav{display:flex;align-items:center;height:40px;padding-left:10px;gap:13px}button{border:0;padding:0;background:none;display:block}
  .more{margin:0 -4px}.tree{flex:1;background:#fff;border-top:1px solid #c4c4c4}`; }
  html() {
    const b = (n, s = 20) => `<button type="button" aria-label="${n}"><art-icon name="${n}" size="${s}"></art-icon></button>`;
    return `<header><span>Layers</span>${b('float', 14)}${b('close', 14)}</header><nav>${b('brush')}${b('addgroup')}${b('eyes')}${b('filter')}${b('epsilon')}<button type="button" class="more" aria-label="epsilon menu"><down-arrow></down-arrow></button>${b('expand')}${b('collapse')}${b('remove')}</nav><div class="tree"><slot></slot></div>`;
  }
});

const tick = `input[type=checkbox]{appearance:none;width:18px;height:18px;margin:0;flex:none;border:1px solid #a9a9a9;background:#fff;display:grid;place-items:center}input[type=checkbox]:checked::before{content:"";width:10px;height:11px;background:#111;clip-path:polygon(0 58%,15% 48%,36% 74%,84% 0,100% 8%,40% 100%)}`;

def('layer-row', class extends Base {
  css() { return `:host{display:flex;align-items:center;height:24px;padding:0 7px 0 30px}:host([selected]){background:#dadada}:host([selected]) b{text-decoration:underline;text-underline-offset:2px}
  label{display:flex;align-items:center;flex:1}.sym{width:21px;height:22px;margin:0 8px;display:grid;place-items:center}.sym hr{width:21px;height:1px;border:0;margin:0}
  .dot{width:5px;height:5px;border-radius:50%;background:#a9b83c;border:1px solid #556}b{font-weight:700;font-size:17px;color:#111}
  .mem{width:21px;height:21px;border:1px solid #ddd;border-radius:2px;background:#fbfbfb;display:grid;place-items:center}${tick}`; }
  html() {
    const s = { pink: '<hr style="background:#dcb8cc">', green: '<hr style="background:#a8d2a4">', dot: '<div class="dot"></div>', pen: '<art-icon name="penline" size="20"></art-icon>' }[this.at('symbol')];
    return `<label><input type="checkbox" checked><span class="sym">${s}</span><b>${this.at('name')}</b></label>${this.hasAttribute('memory') ? '<span class="mem"><art-icon name="memory" size="17"></art-icon></span>' : ''}`;
  }
});

/* ---------- map ---------- */
let seed = 7;
const rnd = () => (seed = (seed * 16807) % 2147483647) / 2147483647;
const blob = (cx, cy, rx, ry, rot = 0, j = .35, n = 14) => {
  let d = ''; const c = Math.cos(rot), s = Math.sin(rot);
  for (let i = 0; i < n; i++) { const a = i / n * 6.283, k = 1 - j * rnd(), x = rx * k * Math.cos(a), y = ry * k * Math.sin(a); d += `${i ? 'L' : 'M'}${(cx + x * c - y * s).toFixed(1)} ${(cy + x * s + y * c).toFixed(1)}`; }
  return d + 'z';
};
const mass = (cx, cy, rx, ry, rot, n, r) => { let d = ''; const c = Math.cos(rot), s = Math.sin(rot); for (let i = 0; i < n; i++) { const a = rnd() * 6.283, k = Math.sqrt(rnd()), x = rx * k * Math.cos(a), y = ry * k * Math.sin(a); d += blob(cx + x * c - y * s, cy + x * s + y * c, r * (.5 + rnd()), r * (.4 + rnd() * .6), rnd() * 3, .4, 7); } return d; };
/* adds small irregular steps to a polyline so that it reads as a surveyed outline */
const rough = (pts, j = 3, closed = true) => { let d = ''; const n = pts.length; for (let i = 0; i < n - (closed ? 0 : 1); i++) { const a = pts[i], b = pts[(i + 1) % n], m = Math.max(1, Math.round(Math.hypot(b[0] - a[0], b[1] - a[1]) / 7)); for (let k = 0; k < m; k++) d += `${d ? 'L' : 'M'}${(a[0] + (b[0] - a[0]) * k / m + (rnd() - .5) * j * 2).toFixed(1)} ${(a[1] + (b[1] - a[1]) * k / m + (rnd() - .5) * j * 2).toFixed(1)}`; } return d + (closed ? 'z' : ''); };
const coast = [[444, 30], [480, 95], [515, 150], [555, 203], [610, 262], [690, 308], [760, 340], [830, 385], [900, 437], [970, 488], [1040, 543], [1110, 604], [1150, 655], [1194, 718]];
const strand = (off, w) => { const p = coast.map(([x, y], i) => [x + off * (w[i] ?? 1) + (rnd() - .5) * 3, y - off * .6 * (w[i] ?? 1) + (rnd() - .5) * 3]); return 'M' + p.map(q => q.map(v => v.toFixed(1)).join(' ')).join('L'); };

def('map-canvas', class extends Base {
  css() { return `:host{display:block;background:#fff;border-left:1px solid #c8c8c8;overflow:hidden}svg{display:block;width:100%;height:100%}`; }
  html() {
    const w = [.9, 1, 1, .8, .3, .6, .8, 1, 1, .9, .8, .8, 1.200, 2];
    let lines = ''; for (const o of [-8, -5, -3, -1, 1, 3, 5, 8]) lines += strand(o, w);
    let scatter = '';
    for (let i = 0; i < 120; i++) { const t = rnd() * 8 + 4.500, k = Math.floor(t), f = t - k; if (!coast[k + 1]) continue; const q = rnd() * rnd(), x = coast[k][0] + (coast[k + 1][0] - coast[k][0]) * f + 8 + q * 40, y = coast[k][1] + (coast[k + 1][1] - coast[k][1]) * f - 6 - q * 40; scatter += blob(x, y, 1 + rnd() * 2.500, 1 + rnd() * 2, 0, .3, 5); }
    const chain = [[94, 62], [112, 100], [136, 140], [172, 196], [198, 231], [242, 283], [287, 330], [335, 377], [382, 422], [430, 468], [464, 497], [500, 521]];
    const pts = []; for (let i = 0; i < chain.length - 1; i++) { const [a, b] = [chain[i], chain[i + 1]]; const n = Math.round(Math.hypot(b[0] - a[0], b[1] - a[1]) / 22); for (let k = 0; k < n; k++) pts.push([a[0] + (b[0] - a[0]) * k / n, a[1] + (b[1] - a[1]) * k / n]); } pts.push([500, 521]);
    return `<svg viewBox="334 188 1367 850" preserveAspectRatio="xMinYMin slice" role="img" aria-label="Map">
    <g transform="translate(1160 800) scale(.345 .3333)" fill="none" stroke="#1f8f1c" stroke-width="4" stroke-linejoin="round">
      <path d="${lines}" stroke-width="3"/>
      <path d="M355 60Q395 160 450 212Q470 222 490 240Q510 246 510 225Q505 195 480 160Q460 140 478 130M388 62Q420 130 462 158Q520 200 590 258M610 262Q690 272 770 330L900 425M472 118L560 205M438 55Q460 100 500 150" stroke-width="3"/>
      <path d="${scatter}" fill="#2f962b" stroke-width="1.500"/>
      <path d="${mass(1000, 162, 66, 30, .6, 210, 7)}${mass(930, 150, 20, 8, -.5, 16, 6)}${mass(940, 122, 26, 9, 0, 22, 5)}${mass(910, 182, 14, 7, 0, 16, 5)}${mass(952, 200, 8, 6, 0, 5, 3)}${mass(1055, 195, 14, 14, 0, 20, 5)}" fill="#2f962b" fill-opacity=".6" stroke-width="2.500"/>
      <path d="${rough([[985, 192], [1010, 184], [1035, 190], [1048, 206], [1030, 214], [1005, 208]], 2)}" fill="#fff" stroke-width="3"/>
      <path d="${rough([[822, 134], [835, 130], [860, 155], [880, 185], [886, 203], [868, 188], [848, 165]], 2)}"/><path d="${mass(832, 140, 20, 11, .7, 34, 5)}" fill="#2f962b"/>
      <path d="M810 120h3M845 94h2M862 102h3M880 120h2M932 88h3M950 200l8 4M890 130l8 6M484 62h2M532 284h3M552 292h2M545 303h2" />
      <path d="${blob(1010, 290, 6, 9)}${blob(1114, 274, 5, 12, -.2)}${mass(1152, 290, 14, 14, .8, 34, 5)}" fill="#2f962b" fill-opacity=".6"/>
      <path d="${rough([[1125, 298], [1138, 315], [1136, 332], [1165, 342], [1158, 326], [1146, 312]], 2)}M1082 350h20M1103 414v4M1100 462h2M1175 335l8 1"/>
      <path d="${blob(1170, 407, 22, 11)}${blob(1172, 407, 14, 7)}${mass(1172, 407, 18, 7, 0, 12, 4)}${mass(1155, 455, 18, 7, -.2, 26, 5)}" />
      <path d="${rough([[1166, 472], [1185, 494], [1203, 488], [1210, 464], [1235, 468], [1252, 462], [1260, 488], [1276, 515], [1288, 542], [1264, 544], [1248, 552], [1215, 528], [1190, 512], [1172, 498]])}M1280 550l12 6-8 2z"/>
      <path d="${mass(1230, 510, 34, 22, .7, 10, 2)}${mass(1178, 486, 14, 12, .5, 12, 4)}"/>
      <path d="${blob(1187, 597, 8, 4, -.4)}M1270 671L1306 672L1300 678L1275 677zM1376 645h4M1432 444h3M1450 439h3"/>
      <path d="${mass(1446, 475, 18, 12, 0, 22, 6)}${mass(1430, 550, 16, 24, .4, 18, 9)}${mass(1432, 505, 10, 18, 0, 10, 6)}"/><path d="${rough([[1428, 500], [1450, 495], [1470, 505], [1492, 514], [1488, 528], [1465, 536], [1440, 520]])}"/>
      <path d="${blob(1530, 594, 42, 18, .05, .15)}${mass(1532, 596, 32, 14, 0, 44, 5)}${blob(1484, 584, 9, 6)}"/>
      <path d="${rough([[1445, 660], [1470, 664], [1500, 656], [1530, 666], [1568, 652]], 4, false)}${rough([[1450, 662], [1458, 690], [1450, 712]], 4, false)}${rough([[1460, 680], [1498, 670], [1496, 690], [1465, 692]], 4, false)}${rough([[1475, 712], [1500, 700], [1520, 668], [1530, 700], [1550, 706], [1568, 690]], 4, false)}M1440 708l8-2M1540 690L1568 678"/>
      <path d="${mass(1515, 690, 50, 22, 0, 26, 6)}${mass(1170, 640, 22, 16, 0, 12, 2)}${mass(1198, 675, 12, 6, 0, 5, 2)}"/>
    </g>
    <g transform="translate(1160 800) scale(.345 .3333)"><g fill="#b9b63c" stroke="#222" stroke-width="4">${pts.map(p => `<circle cx="${p[0].toFixed(1)}" cy="${p[1].toFixed(1)}" r="9.500"/>`).join('')}</g><path d="M${pts.map(p => p.map(v => v.toFixed(1)).join(' ')).join('L')}" fill="none" stroke="#d0584c" stroke-width="2.500" stroke-opacity=".75"/></g>
    <g transform="translate(1330 290) scale(.3333 .357)" fill="none" stroke="#1f8f1c" stroke-width="4.500">
      <circle cx="874" cy="73" r="3.500"/><circle cx="330" cy="489" r="3"/><circle cx="318" cy="502" r="3.500"/><circle cx="305" cy="531" r="2.500"/>
      <path d="M250 632Q255 615 275 615L294 604L292 618L302 632L296 655L275 650L262 650z"/><circle cx="264" cy="634" r="8"/><circle cx="280" cy="632" r="9"/><path d="M280 648l10-12 10 10M286 622l10 14"/>
      <path d="M222 692q4-8 18-5l-4 8-10 2zM300 776q6-10 20-6l8 30q-8 2-14-6zM308 778l14 16"/>
      <path d="M60 1220l10 6M52 1211h2M208 1234l18 2 18 10-8 6-24-8zM218 1238l14 8M210 1369h3"/><path d="M249 1212h7M290 1382l10 8M308 1406l26-10M346 1402l10 3" stroke-width="8"/>
    </g></svg>`;
  }
});

/* ---------- dialog ---------- */
def('tool-dialog', class extends Base {
  css() { return `:host{position:absolute;left:526px;top:188px;width:789px;display:block;background:#ececec;border-radius:13px;box-shadow:0 0 0 1px rgba(0,0,0,.18),0 24px 54px rgba(0,0,0,.48);color:#111;font-size:17px}
  header{display:grid;grid-template-columns:1fr auto 1fr;align-items:center;height:37px;padding:0 10px;background:#f7f2f8;border-radius:13px 13px 0 0;border-bottom:1px solid #d5d1d6}header b{font-weight:600;color:#2c2a2d}
  .body{padding:14px 15px 15px;display:flex;flex-direction:column;gap:8px}.top{display:flex;margin-bottom:29px}slot[name=form]::slotted(*){flex:1}
  .mid{width:22px;display:flex;flex-direction:column;align-items:center;justify-content:space-between;padding:3px 0 220px}.mid svg{display:block}
  .row{display:flex;gap:8px}.row .grow{flex:1}
  .bar{flex:1;height:31px;border:1px solid #a5a5a5;border-radius:3px;background:#fff;display:grid;place-items:center;font-size:16px}`; }
  html() {
    return `<header><traffic-lights live></traffic-lights><b>${this.at('heading')}</b></header><div class="body"><div class="top"><slot name="form"></slot><div class="mid"><svg width="6" height="10"><path d="M0 0v10l6-5z" fill="#444"/></svg><art-icon name="dots" size="22"></art-icon></div><slot name="help"></slot></div>
    <div class="row"><div class="bar" role="progressbar" aria-valuenow="0">0%</div><push-button off>Cancel</push-button></div>
    <div class="row"><push-button>Help</push-button><push-button wide>Run as Batch Process...</push-button><span class="grow"></span><push-button>Close</push-button><push-button primary>Run</push-button></div></div>`;
  }
});

def('push-button', class extends Base {
  css() { return `:host{display:block;width:104px;flex:none;font-size:16px}:host([wide]){width:196px}button{width:100%;height:31px;padding:0;border:1px solid #a8a8a8;border-radius:3px;background:linear-gradient(#fff,#eee);white-space:nowrap}button:disabled{color:#999;border-color:#bbb}:host([primary]) button{border-color:#3f8ae0;background:linear-gradient(#fbfcfe,#e0e7f0)}`; }
  html() { return `<button type="button"${this.hasAttribute('off') ? ' disabled' : ''}><slot></slot></button>`; }
});

def('help-pane', class extends Base {
  css() { return `:host{display:flex;width:146px;height:462px;flex:none;border:1px solid #b5b5b5;background:#fff;color:#505050;line-height:21px}
  .txt{flex:1;min-width:0;padding:0 0 0 6px;overflow:hidden;white-space:nowrap}::slotted(h1){font-size:26px;line-height:30px;font-weight:700;margin:7px 0 16px}::slotted(p){margin:0 0 15px}
  .sb{width:18px;flex:none;border-left:1px solid #c4c4c4;background:#e2e2e2;display:flex;flex-direction:column}.sb div{display:grid;place-items:center;background:#fafafa;height:18px;border-bottom:1px solid #bbb}.sb .thumb{height:150px;background:linear-gradient(90deg,#fff,#f0f0f0)}.sb .end{margin-top:auto;border-top:1px solid #bbb;border-bottom:0}`; }
  html() { return `<div class="txt"><slot></slot></div><div class="sb"><div><down-arrow up></down-arrow></div><div class="thumb"></div><div class="end"><down-arrow></down-arrow></div></div>`; }
});

def('combo-box', class extends Base {
  css() { return `:host{display:flex;align-items:center;height:31px;min-width:0;border:1px solid #a8a8a8;border-radius:3px;background:linear-gradient(#fff,#ebebeb);padding:0 9px 0 6px}select{appearance:none;border:0;background:none;flex:1;min-width:0;padding:0;height:29px;outline:0}art-icon{margin-right:4px}`; }
  html() { return `${this.at('icon') ? `<art-icon name="${this.at('icon')}" size="22"></art-icon>` : ''}<select aria-label="${this.at('label')}"><option>${this.at('value')}</option></select><down-arrow></down-arrow>`; }
});

def('spin-box', class extends Base {
  css() { return `:host{display:flex;height:30px;border:1px solid #a8a8a8;border-radius:3px;background:#fff;min-width:0;align-items:center}input{flex:1;min-width:0;border:0;background:none;padding:0 0 0 6px;height:28px}button{border:0;background:none;padding:0;display:block}.clr{margin-right:14px}.st{width:19px;height:28px;border-left:1px solid #a8a8a8;display:flex;flex-direction:column;align-items:center;justify-content:center;gap:7px;background:linear-gradient(#fff,#f0f0f0)}`; }
  html() { return `<input type="text" aria-label="${this.at('label')}" value="${this.at('value')}">${this.hasAttribute('clearable') ? '<button type="button" class="clr" aria-label="Clear"><art-icon name="erase" size="16"></art-icon></button>' : ''}<div class="st"><button type="button" aria-label="Up"><down-arrow up></down-arrow></button><button type="button" aria-label="Down"><down-arrow></down-arrow></button></div>`; }
});

def('menu-dots', class extends Base {
  css() { return `:host{display:block;flex:none}button{width:30px;height:31px;border:1px solid #a8a8a8;border-radius:3px;background:linear-gradient(#fff,#eee);padding:0 2px 4px 0;display:flex;align-items:flex-end;justify-content:flex-end;font-size:12px;line-height:16px;font-weight:600}:host([short]) button{height:25px;padding-bottom:3px}`; }
  html() { return `<button type="button" aria-label="More">...<down-arrow small></down-arrow></button>`; }
});

def('transect-form', class extends Base {
  css() { return `:host{display:flex;flex-direction:column}
  .tabs{display:flex;align-items:flex-end;height:34px}.tabs button{border:1px solid #a8a8a8;border-bottom:0;border-radius:4px 4px 0 0;padding:0;height:31px;width:61px;background:#e6e6e6;margin-left:-1px}.tabs button.on{height:35px;width:123px;background:linear-gradient(#fff,#f4f4f4);margin:0 0 -1px}
  .pane{border:1px solid #a8a8a8;box-shadow:inset 1px 1px #fafafa;padding:6px 6px 6px;display:flex;flex-direction:column;--above:9px;--below:7px}
  .l{line-height:24px;margin-bottom:var(--below)}.r,.c{display:flex;align-items:center;margin-bottom:var(--above)}.near{--above:7px;--below:6px}
  .end{margin-bottom:11px}.grow{flex:1}.unit{width:120px;margin-left:13px}.icons{display:flex;align-items:flex-start;gap:15px;padding-left:13px}
  .chk{display:flex;align-items:center;gap:7px;height:24px}.chk.off{color:#a6a6a6;margin:4px 0 9px}.chk.off input{background:#ececec;border-color:#bdbdbd}
  .dd{display:flex;align-items:flex-end;gap:5px;border:0;background:none;padding:0 0 0 13px;width:47px;height:24px}
  .out{flex:1;min-width:0;height:31px;margin-right:8px;border:1px solid #a8a8a8;border-radius:3px;background:#fff;padding:0 4px}.out::placeholder{color:#7d7d7d;opacity:1}${tick}`; }
  html() {
    const dd = `<button type="button" class="dd" aria-label="Data defined override"><art-icon name="defined" size="23"></art-icon><down-arrow small></down-arrow></button>`;
    return `<div class="tabs"><button type="button" class="on">Parameters</button><button type="button">Log</button></div>
    <div class="pane">
      <span class="l near">Input layer</span>
      <div class="r"><combo-box class="grow" icon="vsmall" label="Input layer" value="Snapped geometry [EPSG:27700]"></combo-box><div class="icons"><art-icon name="iterate" size="31"></art-icon><art-icon name="wrench" size="31"></art-icon><menu-dots short></menu-dots></div></div>
      <label class="chk off"><input type="checkbox" disabled>Selected features only</label>
      <span class="l">Length of the transect</span>
      <div class="r"><spin-box class="grow" clearable label="Length" value="500.000000"></spin-box><combo-box class="unit" label="Unit" value="meters"></combo-box>${dd}</div>
      <span class="l">Angle in degrees from the original line at the vertices</span>
      <div class="r"><spin-box class="grow" label="Angle" value="90.000000"></spin-box>${dd}</div>
      <span class="l near">Side to create the transects</span>
      <div class="r near"><combo-box class="grow" label="Side" value="Left"></combo-box></div>
      <span class="l near">Transect</span>
      <div class="r end"><input type="text" class="out" aria-label="Transect output" placeholder="[Create temporary layer]"><menu-dots></menu-dots></div>
      <label class="chk"><input type="checkbox" checked>Open output file after running algorithm</label>
    </div>`;
  }
});
</script>
</body>
</html>
